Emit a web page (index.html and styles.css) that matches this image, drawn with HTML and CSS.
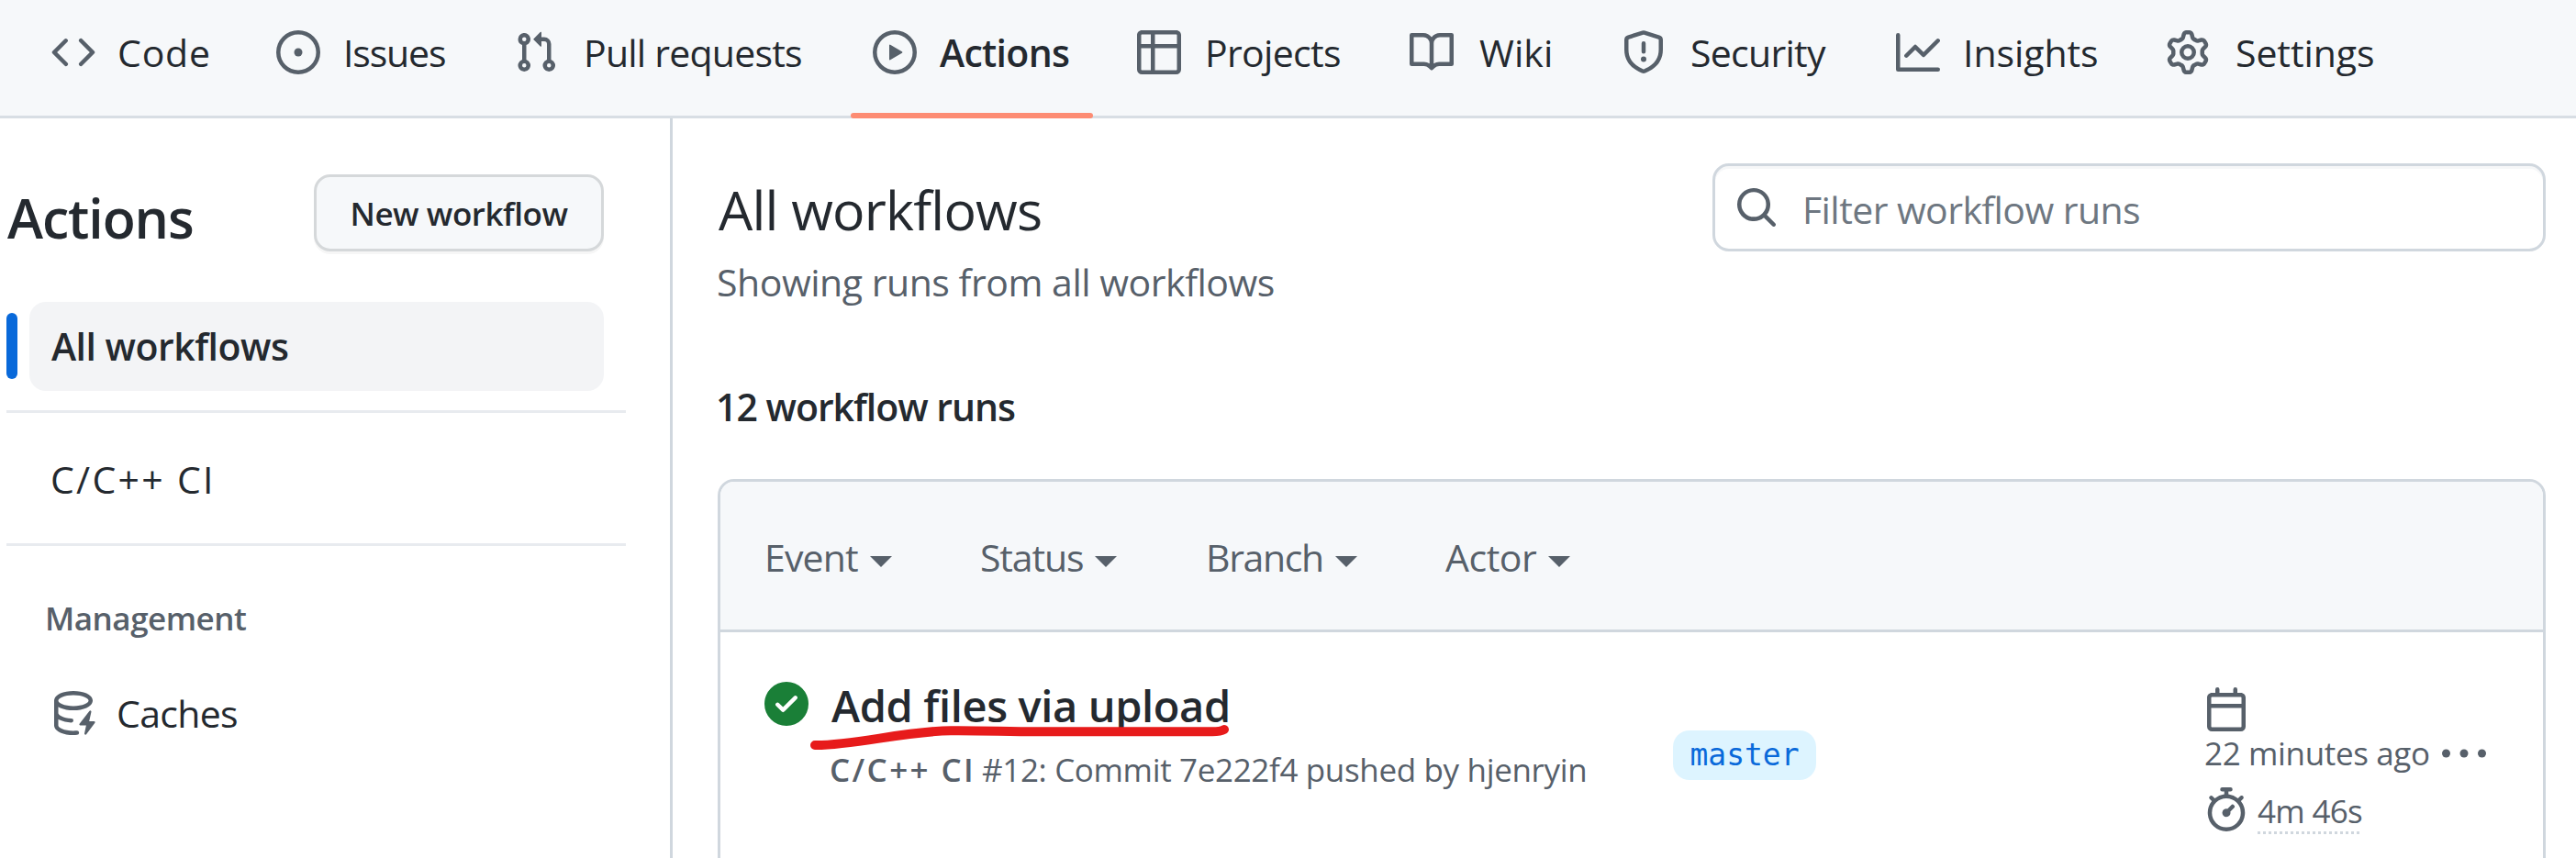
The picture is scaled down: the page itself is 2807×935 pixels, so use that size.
FILE: index.html
```html
<!DOCTYPE html>
<html lang="en">
<head>
<meta charset="utf-8">
<title>Actions</title>
<link rel="stylesheet" href="styles.css">
</head>
<body>
<nav class="nav">
  <a class="tab"><svg class="icon" viewBox="0 0 16 16"><path d="M4.72 3.22a.75.75 0 0 1 1.06 1.06L2.06 8l3.72 3.72a.75.75 0 1 1-1.06 1.06L.47 8.53a.75.75 0 0 1 0-1.06l4.25-4.25Zm6.56 0a.75.75 0 1 0-1.06 1.06L13.94 8l-3.72 3.72a.75.75 0 1 0 1.06 1.06l4.25-4.25a.75.75 0 0 0 0-1.06l-4.25-4.25Z"/></svg><span class="t-code">Code</span></a>
  <a class="tab"><svg class="icon" viewBox="0 0 16 16"><path d="M8 9.5a1.5 1.5 0 1 0 0-3 1.5 1.5 0 0 0 0 3Z"/><path d="M8 0a8 8 0 1 1 0 16A8 8 0 0 1 8 0ZM1.5 8a6.5 6.5 0 1 0 13 0 6.5 6.5 0 0 0-13 0Z"/></svg><span class="t-issues">Issues</span></a>
  <a class="tab"><svg class="icon" viewBox="0 0 16 16"><path d="M7.177 3.073L9.573.677A.25.25 0 0110 .854v4.792a.25.25 0 01-.427.177L7.177 3.427a.25.25 0 010-.354zM3.75 2.5a.75.75 0 100 1.5.75.75 0 000-1.5zm-2.25.75a2.25 2.25 0 113 2.122v5.256a2.251 2.251 0 11-1.5 0V5.372A2.25 2.25 0 011.5 3.25zM11 2.5h-1V4h1a1 1 0 011 1v5.628a2.251 2.251 0 101.5 0V5A2.5 2.5 0 0011 2.5zm1 10.25a.75.75 0 111.5 0 .75.75 0 01-1.5 0zM3.75 12a.75.75 0 100 1.5.75.75 0 000-1.5z"/></svg><span class="t-pulls">Pull requests</span></a>
  <a class="tab tab-active"><svg class="icon" viewBox="0 0 16 16"><path d="M8 0a8 8 0 1 1 0 16A8 8 0 0 1 8 0ZM1.5 8a6.5 6.5 0 1 0 13 0 6.5 6.5 0 0 0-13 0Zm4.879-2.773 4.264 2.559a.25.25 0 0 1 0 .428l-4.264 2.559A.25.25 0 0 1 6 10.559V5.442a.25.25 0 0 1 .379-.215Z"/></svg><span class="t-actions">Actions</span></a>
  <a class="tab"><svg class="icon" viewBox="0 0 16 16"><path d="M0 1.75C0 .784.784 0 1.75 0h12.5C15.216 0 16 .784 16 1.75v12.5A1.75 1.75 0 0 1 14.25 16H1.75A1.75 1.75 0 0 1 0 14.25ZM6.5 6.5v8h7.75a.25.25 0 0 0 .25-.25V6.5Zm8-1.5V1.75a.25.25 0 0 0-.25-.25H6.5V5Zm-13 1.5v7.75c0 .138.112.25.25.25H5v-8ZM5 5V1.5H1.75a.25.25 0 0 0-.25.25V5Z"/></svg><span class="t-projects">Projects</span></a>
  <a class="tab"><svg class="icon" viewBox="0 0 16 16"><path d="M0 1.75A.75.75 0 0 1 .75 1h4.253c1.227 0 2.317.59 3 1.501A3.743 3.743 0 0 1 11.006 1h4.245a.75.75 0 0 1 .75.75v10.5a.75.75 0 0 1-.75.75h-4.507a2.25 2.25 0 0 0-1.591.659l-.622.621a.75.75 0 0 1-1.06 0l-.622-.621A2.25 2.25 0 0 0 5.258 13H.75a.75.75 0 0 1-.75-.75Zm7.251 10.324.004-5.073-.002-2.253A2.25 2.25 0 0 0 5.003 2.5H1.5v9h3.757a3.75 3.75 0 0 1 1.994.574ZM8.755 4.75l-.004 7.322a3.752 3.752 0 0 1 1.992-.572H14.5v-9h-3.495a2.25 2.25 0 0 0-2.25 2.25Z"/></svg><span class="t-wiki">Wiki</span></a>
  <a class="tab"><svg class="icon" viewBox="0 0 16 16"><path d="M7.467.133a1.748 1.748 0 0 1 1.066 0l5.25 1.68A1.75 1.75 0 0 1 15 3.48V7c0 1.566-.32 3.182-1.303 4.682-.983 1.498-2.585 2.813-5.032 3.855a1.697 1.697 0 0 1-1.33 0c-2.447-1.042-4.049-2.357-5.032-3.855C1.32 10.182 1 8.566 1 7V3.48a1.75 1.75 0 0 1 1.217-1.667Zm.61 1.429a.25.25 0 0 0-.153 0l-5.25 1.68a.25.25 0 0 0-.174.238V7c0 1.358.275 2.666 1.057 3.86.784 1.194 2.121 2.34 4.366 3.297a.196.196 0 0 0 .154 0c2.245-.956 3.582-2.104 4.366-3.298C13.225 9.666 13.5 8.36 13.5 7V3.48a.251.251 0 0 0-.174-.237l-5.25-1.68ZM8.75 4.75v3a.75.75 0 0 1-1.5 0v-3a.75.75 0 0 1 1.5 0ZM9 10.5a1 1 0 1 1-2 0 1 1 0 0 1 2 0Z"/></svg><span class="t-security">Security</span></a>
  <a class="tab"><svg class="icon" viewBox="0 0 16 16"><path d="M1.5 1.75V13.5h13.75a.75.75 0 0 1 0 1.5H.75a.75.75 0 0 1-.75-.75V1.75a.75.75 0 0 1 1.5 0Zm14.28 2.53-5.25 5.25a.75.75 0 0 1-1.06 0L7 7.06 4.28 9.78a.751.751 0 0 1-1.042-.018.751.751 0 0 1-.018-1.042l3.25-3.25a.75.75 0 0 1 1.06 0L10 7.94l4.72-4.72a.751.751 0 0 1 1.042.018.751.751 0 0 1 .018 1.042Z"/></svg><span class="t-insights">Insights</span></a>
  <a class="tab"><svg class="icon" viewBox="0 0 16 16"><path d="M8 0a8.2 8.2 0 0 1 .701.031C9.444.095 9.99.645 10.16 1.29l.288 1.107c.018.066.079.158.212.224.231.114.454.243.668.386.123.082.233.09.299.071l1.103-.303c.644-.176 1.392.021 1.82.63.27.385.506.792.704 1.218.315.675.111 1.422-.364 1.891l-.814.806c-.049.048-.098.147-.088.294.016.257.016.515 0 .772-.01.147.038.246.088.294l.814.806c.475.469.679 1.216.364 1.891a7.977 7.977 0 0 1-.704 1.217c-.428.61-1.176.807-1.82.63l-1.102-.302c-.067-.019-.177-.011-.3.071a5.909 5.909 0 0 1-.668.386c-.133.066-.194.158-.211.224l-.29 1.106c-.168.646-.715 1.196-1.458 1.26a8.006 8.006 0 0 1-1.402 0c-.743-.064-1.289-.614-1.458-1.26l-.289-1.106c-.018-.066-.079-.158-.212-.224a5.738 5.738 0 0 1-.668-.386c-.123-.082-.233-.09-.299-.071l-1.103.303c-.644.176-1.392-.021-1.82-.63a8.12 8.12 0 0 1-.704-1.218c-.315-.675-.111-1.422.363-1.891l.815-.806c.05-.048.098-.147.088-.294a6.214 6.214 0 0 1 0-.772c.01-.147-.038-.246-.088-.294l-.815-.806C.635 6.045.431 5.298.746 4.623a7.92 7.92 0 0 1 .704-1.217c.428-.61 1.176-.807 1.82-.63l1.102.302c.067.019.177.011.3-.071.214-.143.437-.272.668-.386.133-.066.194-.158.211-.224l.29-1.106C6.009.645 6.556.095 7.299.03 7.53.01 7.764 0 8 0Zm-.571 1.525c-.036.003-.108.036-.137.146l-.289 1.105c-.147.561-.549.967-.998 1.189-.173.086-.34.183-.5.29-.417.278-.97.423-1.529.27l-1.103-.303c-.109-.03-.175.016-.195.045-.22.312-.412.644-.573.99-.014.031-.021.11.059.19l.815.806c.411.406.562.957.53 1.456a4.709 4.709 0 0 0 0 .582c.032.499-.119 1.05-.53 1.456l-.815.806c-.081.08-.073.159-.059.19.162.346.353.677.573.989.02.03.085.076.195.046l1.102-.303c.56-.153 1.113-.008 1.53.27.161.107.328.204.501.29.447.222.85.629.997 1.189l.289 1.105c.029.109.101.143.137.146a6.6 6.6 0 0 0 1.142 0c.036-.003.108-.036.137-.146l.289-1.105c.147-.561.549-.967.998-1.189.173-.086.34-.183.5-.29.417-.278.97-.423 1.529-.27l1.103.303c.109.029.175-.016.195-.045.22-.313.411-.644.573-.99.014-.031.021-.11-.059-.19l-.815-.806c-.411-.406-.562-.957-.53-1.456a4.709 4.709 0 0 0 0-.582c-.032-.499.119-1.05.53-1.456l.815-.806c.081-.08.073-.159.059-.19a6.464 6.464 0 0 0-.573-.989c-.02-.03-.085-.076-.195-.046l-1.102.303c-.56.153-1.113.008-1.53-.27a4.44 4.44 0 0 0-.501-.29c-.447-.222-.85-.629-.997-1.189l-.289-1.105c-.029-.11-.101-.143-.137-.146a6.6 6.6 0 0 0-1.142 0ZM11 8a3 3 0 1 1-6 0 3 3 0 0 1 6 0ZM9.5 8a1.5 1.5 0 1 0-3.001.001A1.5 1.5 0 0 0 9.5 8Z"/></svg><span class="t-settings">Settings</span></a>
</nav>
<div class="page">
  <aside class="sidebar">
    <header class="side-head">
      <h2 class="side-title">Actions</h2>
      <button class="btn">New workflow</button>
    </header>
    <div class="side-item side-selected">All workflows</div>
    <div class="side-group">C/C++ CI</div>
    <h3 class="side-label">Management</h3>
    <div class="side-cache"><svg class="icon" viewBox="0 0 16 16"><path d="M2.5 5.724V8c0 .248.238.7 1.169 1.159.874.43 2.144.745 3.62.822a.75.75 0 1 1-.078 1.498c-1.622-.085-3.102-.432-4.204-.975a5.565 5.565 0 0 1-.507-.28V12.5c0 .133.058.318.282.551.227.237.591.483 1.101.707 1.015.447 2.47.742 4.117.742.406 0 .802-.018 1.183-.052a.751.751 0 1 1 .134 1.494C8.89 15.98 8.45 16 8 16c-1.805 0-3.475-.32-4.721-.869-.623-.274-1.173-.619-1.579-1.041-.408-.425-.7-.964-.7-1.59v-9c0-.626.292-1.165.7-1.591.406-.42.956-.766 1.579-1.04C4.525.32 6.195 0 8 0c1.806 0 3.476.32 4.721.869.623.274 1.173.619 1.579 1.041.408.425.7.964.7 1.59 0 .626-.292 1.165-.7 1.591-.406.42-.956.766-1.578 1.04C11.475 6.68 9.805 7 8 7c-1.805 0-3.475-.32-4.721-.869a6.15 6.15 0 0 1-.779-.407Zm0-2.224c0 .133.058.318.282.551.227.237.591.483 1.101.707C4.898 5.205 6.353 5.5 8 5.5c1.646 0 3.101-.295 4.118-.742.508-.224.873-.471 1.1-.708.224-.232.282-.417.282-.55 0-.133-.058-.318-.282-.551-.227-.237-.591-.483-1.101-.707C11.102 1.795 9.647 1.5 8 1.5c-1.646 0-3.101.295-4.118.742-.508.224-.873.471-1.1.708-.224.232-.282.417-.282.55Z"/><path d="M14.49 7.582a.375.375 0 0 0-.66-.313l-3.625 4.625a.375.375 0 0 0 .295.606h2.127l-.619 2.922a.375.375 0 0 0 .666.304l3.125-4.125A.375.375 0 0 0 15.5 11h-1.778l.769-3.418Z"/></svg><span class="t-caches">Caches</span></div>
  </aside>
  <main class="main">
    <header class="main-head">
      <div>
        <h1 class="title">All workflows</h1>
        <p class="subtitle">Showing runs from all workflows</p>
      </div>
      <div class="search"><svg class="icon" viewBox="0 0 16 16"><path d="M10.68 11.74a6 6 0 0 1-7.922-8.982 6 6 0 0 1 8.982 7.922l3.04 3.04a.749.749 0 0 1-.326 1.275.749.749 0 0 1-.734-.215ZM11.5 7a4.499 4.499 0 1 0-8.997 0A4.499 4.499 0 0 0 11.5 7Z"/></svg><span class="t-filter">Filter workflow runs</span></div>
    </header>
    <h3 class="count">12 workflow runs</h3>
    <section class="box">
      <div class="box-head">
        <div class="filter"><span class="t-event">Event</span><i class="caret"></i></div>
        <div class="filter"><span class="t-status">Status</span><i class="caret"></i></div>
        <div class="filter"><span class="t-branch">Branch</span><i class="caret"></i></div>
        <div class="filter"><span class="t-actor">Actor</span><i class="caret"></i></div>
      </div>
      <div class="run">
        <svg class="icon check" viewBox="0 0 16 16"><path d="M8 16A8 8 0 1 1 8 0a8 8 0 0 1 0 16Zm3.78-9.72a.751.751 0 0 0-.018-1.042.751.751 0 0 0-1.042-.018L6.75 9.19 5.28 7.72a.751.751 0 0 0-1.042.018.751.751 0 0 0-.018 1.042l2 2a.75.75 0 0 0 1.06 0Z"/></svg>
        <div class="run-text">
          <div class="run-title">Add files via upload<svg class="scribble" viewBox="0 0 460 36"><path d="M7 26C50 26.500 105 10.500 155 10.300C190 10 215 11.300 250 11.300H440Q449 11.300 453 9"/></svg></div>
          <div class="run-sub"><b>C/C++ CI</b><span>#12: Commit 7e222f4 pushed by hjenryin</span></div>
        </div>
        <div class="branch">master</div>
        <div class="meta">
          <svg class="icon" viewBox="0 0 16 16"><path d="M4.75 0a.75.75 0 0 1 .75.75V2h5V.75a.75.75 0 0 1 1.5 0V2h1.25c.966 0 1.75.784 1.75 1.75v10.5A1.75 1.75 0 0 1 13.25 16H2.75A1.75 1.75 0 0 1 1 14.25V3.75C1 2.784 1.784 2 2.75 2H4V.75A.75.75 0 0 1 4.75 0ZM2.5 7.5v6.75c0 .138.112.25.25.25h10.5a.25.25 0 0 0 .25-.25V7.5Zm10.75-4H2.75a.25.25 0 0 0-.25.25V6h11V3.75a.25.25 0 0 0-.25-.25Z"/></svg>
          <span class="ago">22 minutes ago</span>
          <div class="dur"><svg class="icon" viewBox="0 0 16 16"><path d="M5.75.75A.75.75 0 0 1 6.5 0h3a.75.75 0 0 1 0 1.5h-.75v1l-.001.041a6.724 6.724 0 0 1 3.464 1.435l.007-.006.75-.75a.749.749 0 0 1 1.275.326.749.749 0 0 1-.215.734l-.75.75-.006.007a6.75 6.75 0 1 1-10.548 0L2.72 5.03l-.75-.75a.751.751 0 0 1 .018-1.042.751.751 0 0 1 1.042-.018l.75.75.007.006A6.72 6.72 0 0 1 7.25 2.541V1.5H6.5a.75.75 0 0 1-.75-.75ZM8 14.5a5.25 5.25 0 1 0-.001-10.501A5.25 5.25 0 0 0 8 14.5Zm.389-6.7 1.33-1.33a.75.75 0 1 1 1.061 1.06L9.45 8.861A1.503 1.503 0 0 1 8 10.75a1.499 1.499 0 1 1 .389-2.95Z"/></svg><span class="dur-text">4m 46s</span></div>
        </div>
        <svg class="icon kebab" viewBox="0 0 16 16"><circle cx="1.5" cy="8" r="1.5"/><circle cx="8" cy="8" r="1.5"/><circle cx="14.5" cy="8" r="1.5"/></svg>
      </div>
    </section>
  </main>
</div>
</body>
</html>
```
FILE: styles.css
```css
* { box-sizing: border-box; }
body {
  margin: 0;
  height: 935px;
  overflow: hidden;
  background: #fff;
  color: #24292f;
  font: 400 41px/60px "Open Sans", "Noto Sans", sans-serif;
  white-space: nowrap;
}
h1, h2, h3, p { margin: 0; }
.icon { width: 48px; height: 48px; flex: none; fill: #57606a; display: block; }

/* Repository tabs */
.nav {
  display: grid;
  grid-template-columns: 245px 259px 391px 288px 297px 231px 299px 294px 270px;
  height: 129px;
  padding-left: 32px;
  background: #f6f8fa;
  border-bottom: 3px solid #d8dee4;
}
.tab { position: relative; display: flex; align-items: center; gap: 24px; height: 113px; padding-left: 24px; }
.tab span { padding-top: 1px; }
.tab-active { font-weight: 600; }
.tab-active::after {
  content: "";
  position: absolute;
  left: 0;
  top: 123px;
  width: 264px;
  height: 6px;
  border-radius: 3px;
  background: #fd8c73;
}
.t-code { letter-spacing: .81px; }
.t-issues { margin-left: 1px; letter-spacing: -1.14px; }
.t-pulls { margin-left: 4px; letter-spacing: -.78px; }
.t-actions { margin-left: 1px; letter-spacing: -.7px; }
.t-projects { margin-left: 2px; letter-spacing: -.67px; }
.t-wiki { margin-left: 4px; letter-spacing: .08px; }
.t-security { margin-left: 3px; letter-spacing: -.72px; }
.t-insights { margin-left: 1px; letter-spacing: -.07px; }
.t-settings { margin-left: 4px; letter-spacing: -.07px; }

.page { display: flex; height: 806px; overflow: hidden; }

/* Sidebar */
.sidebar { width: 733px; flex: none; border-right: 3px solid #d0d7de; padding-left: 7px; }
.side-head { display: flex; justify-content: space-between; padding: 61px 72px 0 1px; height: 200px; }
.side-title { font-size: 59px; line-height: 94px; font-weight: 600; letter-spacing: -1.1px; }
.btn {
  width: 316px;
  height: 84px;
  padding: 2px 0 0;
  border: 3px solid #d5d8da;
  border-radius: 18px;
  background: #f6f8fa;
  box-shadow: 0 3px 0 rgba(27, 31, 36, .04);
  color: #24292f;
  font: 600 35px/76px "Open Sans", "Noto Sans", sans-serif;
  letter-spacing: -.46px;
}
.side-item { position: relative; margin: 0 72px 0 25px; height: 97px; padding-left: 24px; line-height: 97px; }
.side-selected { background: #f3f4f6; border-radius: 18px; font-weight: 600; letter-spacing: -.5px; }
.side-selected::before {
  content: "";
  position: absolute;
  left: -25px;
  top: 12px;
  width: 12px;
  height: 72px;
  border-radius: 9px;
  background: #0969da;
}
.side-group {
  margin: 21px 48px 0 0;
  height: 148px;
  padding-left: 48px;
  line-height: 145px;
  letter-spacing: 2.28px;
  border-top: 3px solid #e8ebef;
  border-bottom: 3px solid #e8ebef;
}
.side-label { margin: 49px 0 0 42px; font-size: 35px; font-weight: 600; letter-spacing: -.49px; color: #57606a; }
.side-cache { display: flex; align-items: center; gap: 23px; margin: 43px 0 0 49px; }
.t-caches { letter-spacing: -.68px; }

/* Runs */
.main { flex: 1; padding: 49px 33px 0 49px; }
.main-head { display: flex; justify-content: space-between; height: 235px; }
.title { padding-left: 1px; font-size: 59px; line-height: 100px; font-weight: 400; letter-spacing: -.81px; }
.subtitle { margin-left: -1px; line-height: 58px; color: #57606a; letter-spacing: -.47px; }
.search {
  display: flex;
  align-items: center;
  gap: 26px;
  width: 908px;
  height: 96px;
  padding-left: 21px;
  border: 3px solid #d0d7de;
  border-radius: 18px;
  box-shadow: inset 0 3px 0 rgba(208, 215, 222, .2);
  color: #6e7781;
}
.t-filter { padding-top: 3px; letter-spacing: -.57px; }
.count { margin-left: -2px; font-size: 41px; font-weight: 600; letter-spacing: -1.02px; }
.box { height: 500px; margin-top: 49px; border: 3px solid #d0d7de; border-radius: 18px; overflow: hidden; }
.box-head {
  display: grid;
  grid-template-columns: 235px 246px 261px 200px;
  align-items: center;
  height: 164px;
  padding-left: 48px;
  background: #f6f8fa;
  border-bottom: 3px solid #d0d7de;
  color: #57606a;
}
.filter { display: flex; align-items: center; gap: 13px; padding-top: 3px; }
.caret { margin-top: 10px; border: 12px solid transparent; border-top-color: #57606a; border-bottom: 0; }
.t-event { letter-spacing: -.86px; }
.t-status { letter-spacing: -1.13px; }
.t-branch { letter-spacing: -1.36px; }
.t-actor { letter-spacing: -.46px; }

.run { display: grid; grid-template-columns: 73px 917px 579px 259px 1fr; padding-left: 48px; color: #57606a; font-size: 35px; }
.check { margin-top: 54px; fill: #1a7f37; }
.run-title { position: relative; height: 60px; margin-top: 50px; color: #24292f; font-size: 47px; font-weight: 600; letter-spacing: -.37px; }
.scribble { position: absolute; left: -25px; top: 47px; width: 460px; height: 36px; fill: none; stroke: #e71b1b; stroke-width: 10; stroke-linecap: round; }
.run-sub { display: flex; margin: 10px 0 0 -2px; letter-spacing: -.35px; }
.run-sub b { width: 166px; font-weight: 600; letter-spacing: 2.38px; }
.branch {
  justify-self: start;
  width: 156px;
  height: 54px;
  margin-top: 107px;
  border-radius: 18px;
  background: #ddf4ff;
  color: #0969da;
  font: 33px/54px "DejaVu Sans Mono", monospace;
  text-align: center;
}
.meta { margin-top: 60px; }
.ago { display: block; height: 48px; line-height: 48px; letter-spacing: -.36px; }
.dur { display: flex; gap: 10px; margin-top: 13px; }
.dur-text {
  height: 51px;
  line-height: 52px;
  letter-spacing: -.71px;
  background: repeating-linear-gradient(90deg, #d0d7de 0 3px, transparent 3px 6px) bottom / 100% 3px no-repeat;
}
.kebab { margin-top: 108px; }
```
